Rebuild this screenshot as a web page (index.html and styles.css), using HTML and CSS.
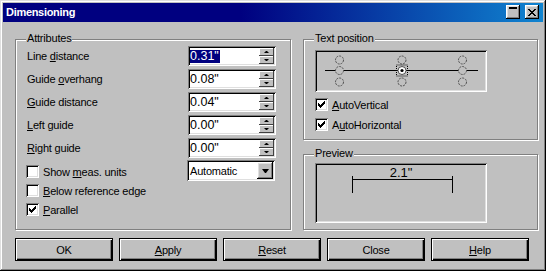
FILE: index.html
```html
<!DOCTYPE html>
<html>
<head>
<meta charset="utf-8">
<link rel="stylesheet" href="styles.css">
</head>
<body>
<div class="window">
  <div class="titlebar">
    <span class="title">Dimensioning</span>
    <div class="tb-buttons">
      <span class="tb-btn tb-min"><i></i></span>
      <span class="tb-btn tb-close">
        <svg width="8" height="7" viewBox="0 0 8 7"><path d="M0 0h2v1h-2z M6 0h2v1h-2z M1 1h2v1h-2z M5 1h2v1h-2z M2 2h4v1h-4z M3 3h2v1h-2z M2 4h4v1h-4z M1 5h2v1h-2z M5 5h2v1h-2z M0 6h2v1h-2z M6 6h2v1h-2z" fill="#000"/></svg>
      </span>
    </div>
  </div>
  <div class="client">
    <div class="groups">
      <div class="group attrs">
        <span class="legend">Attributes</span>
        <div class="row">
          <span class="label">Line <u>d</u>istance</span>
          <div class="field"><span class="val"><span class="sel">0.31"</span></span><span class="spinbtns"><span class="sb up"></span><span class="sb down"></span></span></div>
        </div>
        <div class="row">
          <span class="label">Guide <u>o</u>verhang</span>
          <div class="field"><span class="val">0.08"</span><span class="spinbtns"><span class="sb up"></span><span class="sb down"></span></span></div>
        </div>
        <div class="row">
          <span class="label"><u>G</u>uide distance</span>
          <div class="field"><span class="val">0.04"</span><span class="spinbtns"><span class="sb up"></span><span class="sb down"></span></span></div>
        </div>
        <div class="row">
          <span class="label"><u>L</u>eft guide</span>
          <div class="field"><span class="val">0.00"</span><span class="spinbtns"><span class="sb up"></span><span class="sb down"></span></span></div>
        </div>
        <div class="row">
          <span class="label"><u>R</u>ight guide</span>
          <div class="field"><span class="val">0.00"</span><span class="spinbtns"><span class="sb up"></span><span class="sb down"></span></span></div>
        </div>
        <div class="row combo-row">
          <span class="label check first-check"><span class="cb"></span><span>Show <u>m</u>eas. units</span></span>
          <div class="field combo"><span class="cval">Automatic</span><span class="dd"></span></div>
        </div>
        <div class="row check-row">
          <span class="check"><span class="cb"></span><span><u>B</u>elow reference edge</span></span>
        </div>
        <div class="row check-row">
          <span class="check"><span class="cb checked"><svg width="7" height="7" viewBox="0 0 7 7"><path d="M6 0h1v1h-1z M5 1h2v1h-2z M0 2h1v1h-1z M4 2h3v1h-3z M0 3h2v1h-2z M3 3h3v1h-3z M0 4h5v1h-5z M1 5h3v1h-3z M2 6h1v1h-1z" fill="#000"/></svg></span><span><u>P</u>arallel</span></span>
        </div>
      </div>
      <div class="col-right">
        <div class="group textpos">
          <span class="legend">Text position</span>
          <div class="sunken posbox">
            <svg class="posgrid" width="168" height="38" viewBox="0 0 168 38">
              <line x1="8" y1="18.5" x2="161" y2="18.5" stroke="#000" stroke-width="1"/>
              <g fill="#c0c0c0" stroke="#505050" stroke-width="1" stroke-dasharray="2 1">
                <circle cx="22.5" cy="8" r="4"/>
                <circle cx="85" cy="8" r="4"/>
                <circle cx="145.5" cy="8" r="4"/>
                <circle cx="22.5" cy="18.5" r="4"/>
                <circle cx="145.5" cy="18.5" r="4"/>
                <circle cx="22.5" cy="30" r="4"/>
                <circle cx="85" cy="30" r="4"/>
                <circle cx="145.5" cy="30" r="4"/>
              </g>
              <circle cx="85" cy="18.5" r="4" fill="#fff" stroke="#505050" stroke-width="1"/>
              <circle cx="85" cy="18.5" r="1.6" fill="#000"/>
              <rect x="79.5" y="13" width="11" height="11" fill="none" stroke="#000" stroke-width="1" stroke-dasharray="1 1"/>
            </svg>
          </div>
          <div class="pos-check">
            <span class="check"><span class="cb checked"><svg width="7" height="7" viewBox="0 0 7 7"><path d="M6 0h1v1h-1z M5 1h2v1h-2z M0 2h1v1h-1z M4 2h3v1h-3z M0 3h2v1h-2z M3 3h3v1h-3z M0 4h5v1h-5z M1 5h3v1h-3z M2 6h1v1h-1z" fill="#000"/></svg></span><span><u>A</u>utoVertical</span></span>
          </div>
          <div class="pos-check">
            <span class="check"><span class="cb checked"><svg width="7" height="7" viewBox="0 0 7 7"><path d="M6 0h1v1h-1z M5 1h2v1h-2z M0 2h1v1h-1z M4 2h3v1h-3z M0 3h2v1h-2z M3 3h3v1h-3z M0 4h5v1h-5z M1 5h3v1h-3z M2 6h1v1h-1z" fill="#000"/></svg></span><span>A<u>u</u>toHorizontal</span></span>
          </div>
        </div>
        <div class="group preview">
          <span class="legend">Preview</span>
          <div class="sunken prevbox">
            <svg class="prevsvg" width="168" height="56" viewBox="0 0 168 56">
              <text x="84" y="12" text-anchor="middle" class="dimtext">2.1"</text>
              <line x1="35" y1="14.5" x2="136" y2="14.5" stroke="#000"/>
              <line x1="35.5" y1="11" x2="35.5" y2="28" stroke="#000"/>
              <line x1="135.5" y1="11" x2="135.5" y2="28" stroke="#000"/>
            </svg>
          </div>
        </div>
      </div>
    </div>
    <div class="buttons">
      <span class="btn">OK</span>
      <span class="btn"><u>A</u>pply</span>
      <span class="btn"><u>R</u>eset</span>
      <span class="btn">Close</span>
      <span class="btn"><u>H</u>elp</span>
    </div>
  </div>
</div>
</body>
</html>
```

FILE: styles.css
```css
html, body {
  margin: 0;
  padding: 0;
  background: #c0c0c0;
}
body {
  font-family: "Liberation Sans", Arial, sans-serif;
  font-size: 11px;
  color: #000;
}
u { text-decoration: underline; text-underline-offset: 1px; }

.window {
  width: 546px;
  height: 271px;
  box-sizing: border-box;
  padding: 3px;
  background: #c0c0c0;
  box-shadow: inset -1px -1px #000, inset 1px 1px #dfdfdf, inset -2px -2px #808080, inset 2px 2px #fff;
  display: flex;
  flex-direction: column;
}

.titlebar {
  height: 19px;
  flex: none;
  background: linear-gradient(to right, #000080 0%, #000080 44%, #1084d0 100%);
  display: flex;
  justify-content: space-between;
  align-items: flex-start;
  color: #fff;
}
.title {
  font-weight: bold;
  font-size: 11px;
  line-height: 19px;
  padding-left: 3px;
  letter-spacing: -0.3px;
}
.tb-buttons {
  display: flex;
  gap: 5px;
  padding: 2px 4px 0 0;
}
.tb-btn {
  width: 14px;
  height: 14px;
  box-sizing: border-box;
  background: #c0c0c0;
  box-shadow: inset -1px -1px #000, inset 1px 1px #fff, inset -2px -2px #808080, inset 2px 2px #dfdfdf;
  display: flex;
  align-items: center;
  justify-content: center;
}
.tb-min {
  align-items: flex-start;
  padding-top: 2px;
}
.tb-min i {
  display: block;
  width: 8px;
  height: 2px;
  background: #000;
}
.tb-close svg { display: block; }

.client {
  flex: 1;
  padding: 17px 0 0 12px;
  display: flex;
  flex-direction: column;
}
.groups {
  display: flex;
  gap: 12px;
}
.group {
  position: relative;
  box-sizing: border-box;
  border: 1px solid #808080;
  box-shadow: inset 1px 1px #fff, 1px 1px #fff;
}
.legend {
  position: absolute;
  top: -8px;
  left: 10px;
  padding: 0 1px;
  line-height: 13px;
  background: #c0c0c0;
  letter-spacing: -0.2px;
}

.attrs {
  width: 276px;
  height: 191px;
  padding: 6px 0 0 11px;
}
.row {
  display: flex;
  align-items: center;
  height: 20px;
  margin-bottom: 3px;
}
.label {
  width: 161px;
  letter-spacing: -0.2px;
}
.field {
  width: 88px;
  height: 20px;
  box-sizing: border-box;
  background: #fff;
  box-shadow: inset 1px 1px #808080, inset -1px -1px #fff, inset 2px 2px #000, inset -2px -2px #dfdfdf;
  padding: 2px;
  display: flex;
}
.val {
  flex: 1;
  display: flex;
  align-items: center;
  font-size: 12.5px;
  line-height: 13px;
}
.sel {
  background: #000080;
  color: #fff;
  padding-right: 1px;
}
.spinbtns {
  width: 15px;
  display: flex;
  flex-direction: column;
}
.sb {
  flex: 1;
  background: #c0c0c0;
  box-shadow: inset -1px -1px #404040, inset 1px 1px #fff;
  display: flex;
  align-items: center;
  justify-content: center;
}
.sb::after {
  content: "";
  width: 1px;
  height: 0;
  border-left: 2px solid transparent;
  border-right: 2px solid transparent;
}
.sb.up::after { border-bottom: 2px solid #000; }
.sb.down::after { border-top: 2px solid #000; }

.combo-row {
  height: 21px;
  margin-top: -1px;
  align-items: flex-start;
  margin-bottom: 3px;
}
.combo {
  height: 21px;
}
.cval {
  flex: 1;
  display: flex;
  align-items: center;
  padding-left: 1px;
  letter-spacing: -0.2px;
}
.dd {
  width: 16px;
  background: #c0c0c0;
  box-shadow: inset -1px -1px #000, inset 1px 1px #fff, inset -2px -2px #808080, inset 2px 2px #dfdfdf;
  display: flex;
  align-items: center;
  justify-content: center;
}
.dd::after {
  content: "";
  width: 1px;
  height: 0;
  border-left: 3px solid transparent;
  border-right: 3px solid transparent;
  border-top: 4px solid #000;
}

.check {
  display: flex;
  align-items: center;
  gap: 4px;
  margin-left: -1px;
  letter-spacing: -0.2px;
}
.first-check {
  margin-top: 5px;
}
.check-row {
  height: 19px;
  margin-bottom: 0;
  align-items: flex-start;
}
.cb {
  width: 13px;
  height: 13px;
  box-sizing: border-box;
  flex: none;
  background: #fff;
  box-shadow: inset 1px 1px #808080, inset -1px -1px #fff, inset 2px 2px #000, inset -2px -2px #dfdfdf;
  display: flex;
  align-items: center;
  justify-content: center;
}
.cb svg { display: block; }

.col-right {
  width: 235px;
  display: flex;
  flex-direction: column;
  gap: 14px;
}
.textpos {
  height: 101px;
  padding: 10px 0 0 11px;
}
.sunken {
  box-sizing: border-box;
  padding: 2px;
  box-shadow: inset 1px 1px #808080, inset -1px -1px #fff, inset 2px 2px #000, inset -2px -2px #dfdfdf;
}
.posbox {
  width: 172px;
  height: 42px;
}
.posgrid, .prevsvg { display: block; }
.pos-check {
  height: 20px;
  display: flex;
  align-items: flex-start;
  margin-left: 1px;
}
.posbox + .pos-check { margin-top: 6px; }

.preview {
  height: 76px;
  padding: 8px 0 0 11px;
}
.prevbox {
  width: 172px;
  height: 60px;
  overflow: hidden;
}
.dimtext {
  font-family: "Liberation Sans", Arial, sans-serif;
  font-size: 13px;
  fill: #000;
}

.buttons {
  display: flex;
  gap: 6px;
  margin-top: 8px;
}
.btn {
  width: 98px;
  height: 23px;
  box-sizing: border-box;
  border: 1px solid #000;
  box-shadow: inset 1px 1px #fff, inset -1px -1px #000, inset -2px -2px #808080;
  display: flex;
  align-items: center;
  justify-content: center;
  letter-spacing: -0.2px;
}
```
